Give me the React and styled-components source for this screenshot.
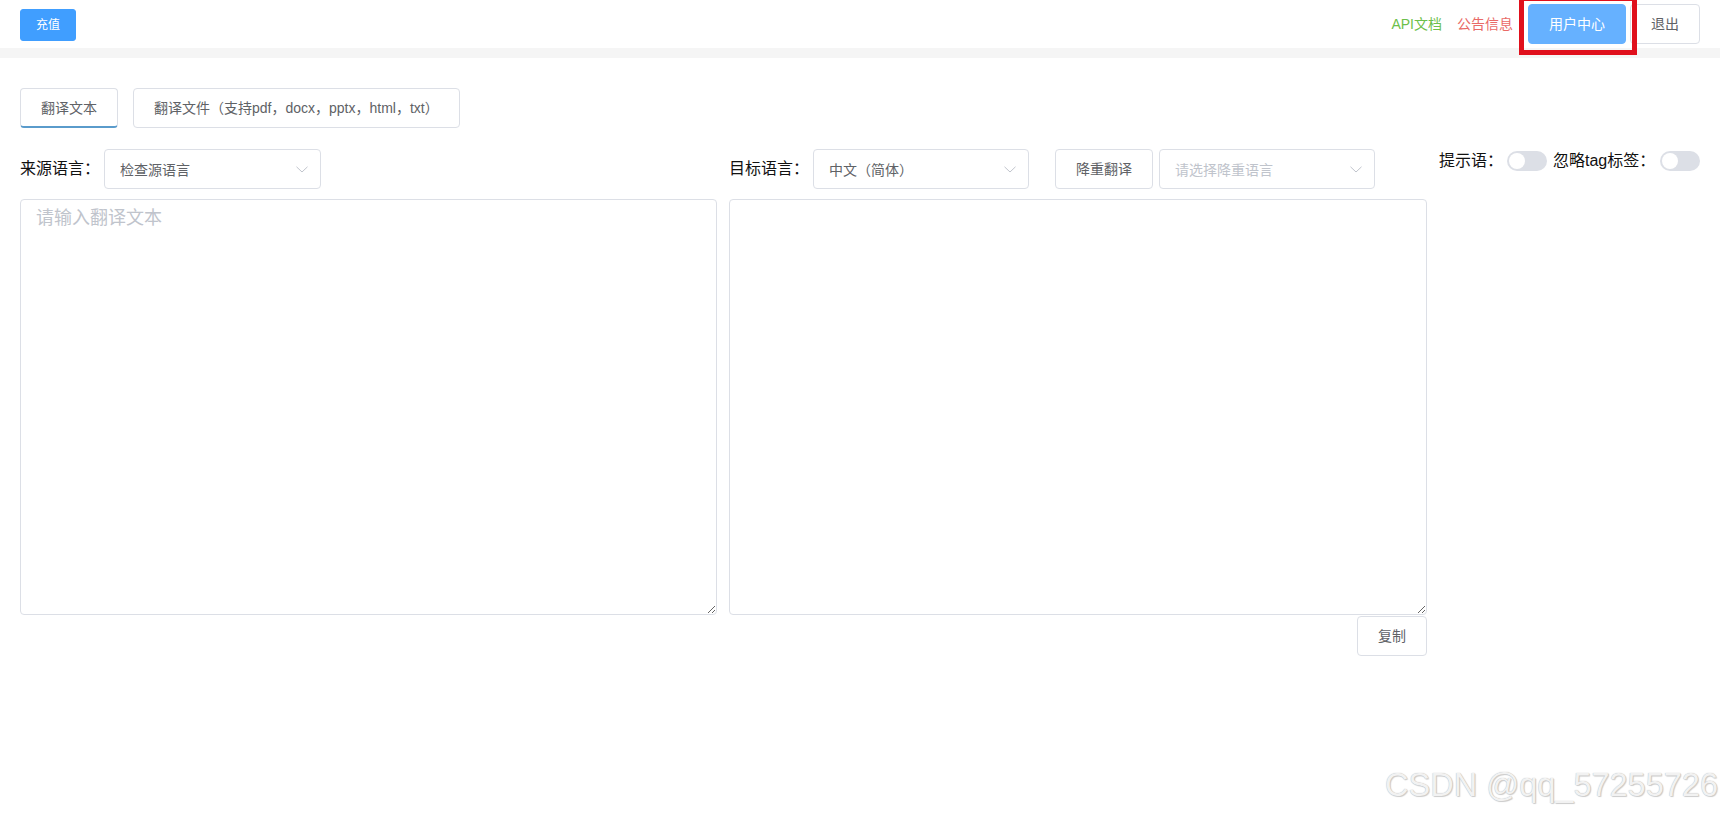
import React from "react";
import styled, { createGlobalStyle } from "styled-components";

const GlobalStyle = createGlobalStyle`
  html, body { margin: 0; padding: 0; background: #fff; }
  body {
    font-family: "Liberation Sans", "Noto Sans CJK SC", sans-serif;
    color: #303133;
  }
  * { box-sizing: border-box; }
`;

const Page = styled.div`
  position: relative;
  min-height: 100vh;
  overflow: hidden;
`;

const Header = styled.header`
  height: 48px;
  display: flex;
  justify-content: space-between;
  align-items: flex-start;
  padding: 4px 23px 0 20px;
`;

const Button = styled.button`
  height: ${(p) => (p.$small ? "32px" : "40px")};
  padding: 0 ${(p) => (p.$small ? "15px" : "20px")};
  margin-top: ${(p) => (p.$small ? "5px" : "0")};
  border-radius: ${(p) => (p.$small ? "3px" : "4px")};
  border: 1px solid ${(p) => p.$bg || "#dcdfe6"};
  background: ${(p) => p.$bg || "#fff"};
  color: ${(p) => (p.$bg ? "#fff" : "#606266")};
  font-family: inherit;
  font-size: ${(p) => (p.$small ? "12px" : "14px")};
  line-height: 1;
  white-space: nowrap;
  display: inline-flex;
  align-items: center;
  justify-content: center;
  cursor: pointer;
  flex-shrink: 0;
`;

const RightNav = styled.nav`
  display: flex;
  align-items: center;
  height: 40px;
`;

const NavLink = styled.a`
  font-size: 14px;
  line-height: 20px;
  color: ${(p) => p.$color};
  margin-right: 15px;
  text-decoration: none;
  cursor: pointer;
`;

const Highlight = styled.div`
  position: relative;
  margin-right: 4px;
  &::after {
    content: "";
    position: absolute;
    left: -9px;
    right: -11px;
    top: -8px;
    bottom: -11px;
    border: 5px solid #e0101c;
    pointer-events: none;
    z-index: 2;
  }
`;

const Band = styled.div`
  height: 10px;
  background: #f5f5f5;
  margin-right: 3px;
`;

const Main = styled.main`
  padding: 30px 23px 0 20px;
`;

const Tabs = styled.div`
  display: flex;
  gap: 15px;
`;

const Tab = styled.button`
  height: 40px;
  padding: 0 20px;
  border: 1px solid #dcdfe6;
  border-bottom: ${(p) => (p.$active ? "2px solid #5a9bcb" : "1px solid #dcdfe6")};
  border-radius: 4px;
  background: #fff;
  color: #606266;
  font-family: inherit;
  font-size: 14px;
  line-height: 1;
  white-space: nowrap;
  cursor: pointer;
`;

const Workspace = styled.div`
  display: grid;
  grid-template-columns: 697px 698px 1fr;
  column-gap: 12px;
  margin-top: 21px;
`;

const Controls = styled.div`
  display: flex;
  align-items: center;
  height: 40px;
  white-space: nowrap;
`;

const FieldLabel = styled.span`
  font-size: 16px;
  line-height: 24px;
  color: #111;
  margin-right: 4px;
  white-space: nowrap;
`;

const SelectBox = styled.div`
  width: ${(p) => p.$w}px;
  height: 40px;
  border: 1px solid #dcdfe6;
  border-radius: 4px;
  background: #fff;
  display: flex;
  align-items: center;
  justify-content: space-between;
  padding: 0 12px 0 15px;
  margin-left: ${(p) => p.$ml || 0}px;
  flex-shrink: 0;
  font-size: 14px;
  color: ${(p) => (p.$placeholder ? "#c0c4cc" : "#606266")};
`;

const Chevron = () => (
  <svg width="12" height="7" viewBox="0 0 12 7" fill="none">
    <polyline points="0.5,0.8 6,6 11.5,0.8" stroke="#c0c4cc" strokeWidth="1" />
  </svg>
);

const Spaced = styled.div`
  margin-left: ${(p) => p.$ml}px;
  display: flex;
`;

const Switches = styled.div`
  justify-self: end;
  align-self: start;
  display: flex;
  align-items: center;
  height: 24px;
  white-space: nowrap;
`;

const Toggle = styled.span`
  position: relative;
  width: 40px;
  height: 20px;
  border-radius: 10px;
  background: #dcdfe6;
  margin-left: ${(p) => p.$ml}px;
  margin-right: ${(p) => p.$mr}px;
  flex-shrink: 0;
  &::after {
    content: "";
    position: absolute;
    top: 2px;
    left: 2px;
    width: 16px;
    height: 16px;
    border-radius: 50%;
    background: #fff;
  }
`;

const TextArea = styled.textarea`
  display: block;
  width: 100%;
  height: 416px;
  margin-top: 10px;
  padding: 5px 15px;
  border: 1px solid #dcdfe6;
  border-radius: 4px;
  font-family: inherit;
  font-size: 18px;
  line-height: 1.5;
  color: #606266;
  background: #fff;
  outline: none;
  &::placeholder { color: #c0c4cc; }
`;

const CopyCell = styled.div`
  grid-column: 2;
  display: flex;
  justify-content: flex-end;
  margin-top: 1px;
`;

const Watermark = styled.div`
  position: absolute;
  right: 5px;
  bottom: 11px;
  font-family: "Liberation Sans", Arial, sans-serif;
  font-size: 32.5px;
  line-height: 38px;
  color: #f2f2f2;
  text-shadow: 0 0 1px #a8a8a8, 1px 1px 1px #cfcfcf;
  pointer-events: none;
  white-space: nowrap;
`;

export default function App() {
  return (
    <Page>
      <GlobalStyle />
      <Header>
        <Button $small $bg="#409eff">充值</Button>
        <RightNav>
          <NavLink $color="#6cc04a">API文档</NavLink>
          <NavLink $color="#e96a67">公告信息</NavLink>
          <Highlight>
            <Button $bg="#66b1ff">用户中心</Button>
          </Highlight>
          <Button>退出</Button>
        </RightNav>
      </Header>
      <Band />
      <Main>
        <Tabs>
          <Tab $active>翻译文本</Tab>
          <Tab>翻译文件（支持pdf，docx，pptx，html，txt）</Tab>
        </Tabs>
        <Workspace>
          <Controls>
            <FieldLabel>来源语言：</FieldLabel>
            <SelectBox $w={217}>
              <span>检查源语言</span>
              <Chevron />
            </SelectBox>
          </Controls>
          <Controls>
            <FieldLabel>目标语言：</FieldLabel>
            <SelectBox $w={216}>
              <span>中文（简体）</span>
              <Chevron />
            </SelectBox>
            <Spaced $ml={26}>
              <Button>降重翻译</Button>
            </Spaced>
            <SelectBox $w={216} $ml={6} $placeholder>
              <span>请选择降重语言</span>
              <Chevron />
            </SelectBox>
          </Controls>
          <Switches>
            <FieldLabel>提示语：</FieldLabel>
            <Toggle $ml={0} $mr={6} />
            <FieldLabel>忽略tag标签：</FieldLabel>
            <Toggle $ml={1} $mr={0} />
          </Switches>
          <div>
            <TextArea placeholder="请输入翻译文本" />
          </div>
          <div>
            <TextArea />
          </div>
          <div />
          <CopyCell>
            <Button>复制</Button>
          </CopyCell>
        </Workspace>
      </Main>
      <Watermark>CSDN @qq_57255726</Watermark>
    </Page>
  );
}
